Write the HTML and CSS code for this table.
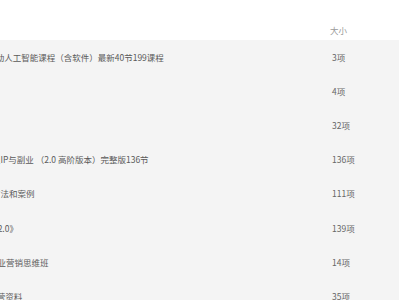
FILE: index.html
```html
<!DOCTYPE html>
<html lang="zh-CN">
<head>
<meta charset="utf-8">
<title>文件列表</title>
<link rel="stylesheet" href="styles.css">
</head>
<body>
<div class="viewport">
  <div class="file-table">
    <div class="row head">
      <div class="cell name">文件名</div>
      <div class="cell size">大小</div>
    </div>
    <div class="row">
      <div class="cell name">最新版零基础入门全自动人工智能课程（含软件）最新40节199课程</div>
      <div class="cell size">3项</div>
    </div>
    <div class="row">
      <div class="cell name">AI绘画教程</div>
      <div class="cell size">4项</div>
    </div>
    <div class="row">
      <div class="cell name">短视频剪辑</div>
      <div class="cell size">32项</div>
    </div>
    <div class="row">
      <div class="cell name">1期抖音短视频打造个人IP与副业 （2.0 高阶版本）完整版136节</div>
      <div class="cell size">136项</div>
    </div>
    <div class="row">
      <div class="cell name">抖音直播带货起号5种方法和案例</div>
      <div class="cell size">111项</div>
    </div>
    <div class="row">
      <div class="cell name">《抖音小店无货源运营 2.0》</div>
      <div class="cell size">139项</div>
    </div>
    <div class="row">
      <div class="cell name">2024实体店老板线上商业营销思维班</div>
      <div class="cell size">14项</div>
    </div>
    <div class="row">
      <div class="cell name">小红书从0到1的全套运营资料</div>
      <div class="cell size">35项</div>
    </div>
  </div>
</div>
</body>
</html>
```

FILE: styles.css
```css
html, body {
  margin: 0;
  padding: 0;
  background: #f4f4f4;
  overflow: hidden;
}

.viewport {
  width: 399px;
  height: 300px;
  overflow: hidden;
}

.file-table {
  margin-left: -89.25px;
  font-family: "Noto Sans CJK SC", "Microsoft YaHei", sans-serif;
  font-size: 8.5px;
  color: #5a5a5a;
}

.row {
  display: grid;
  grid-template-columns: 419.25px 1fr;
  align-items: center;
  height: 34.1px;
  background: #f4f4f4;
}

.row.head {
  height: 40px;
  background: #ffffff;
  align-items: end;
  color: #9a9a9a;
}

.cell {
  white-space: nowrap;
  line-height: 10px;
}

.row.head .cell {
  padding-bottom: 5px;
}

.size {
  padding-left: 2px;
  color: #666;
}

.row.head .size {
  padding-left: 0;
  color: #9a9a9a;
}
```
